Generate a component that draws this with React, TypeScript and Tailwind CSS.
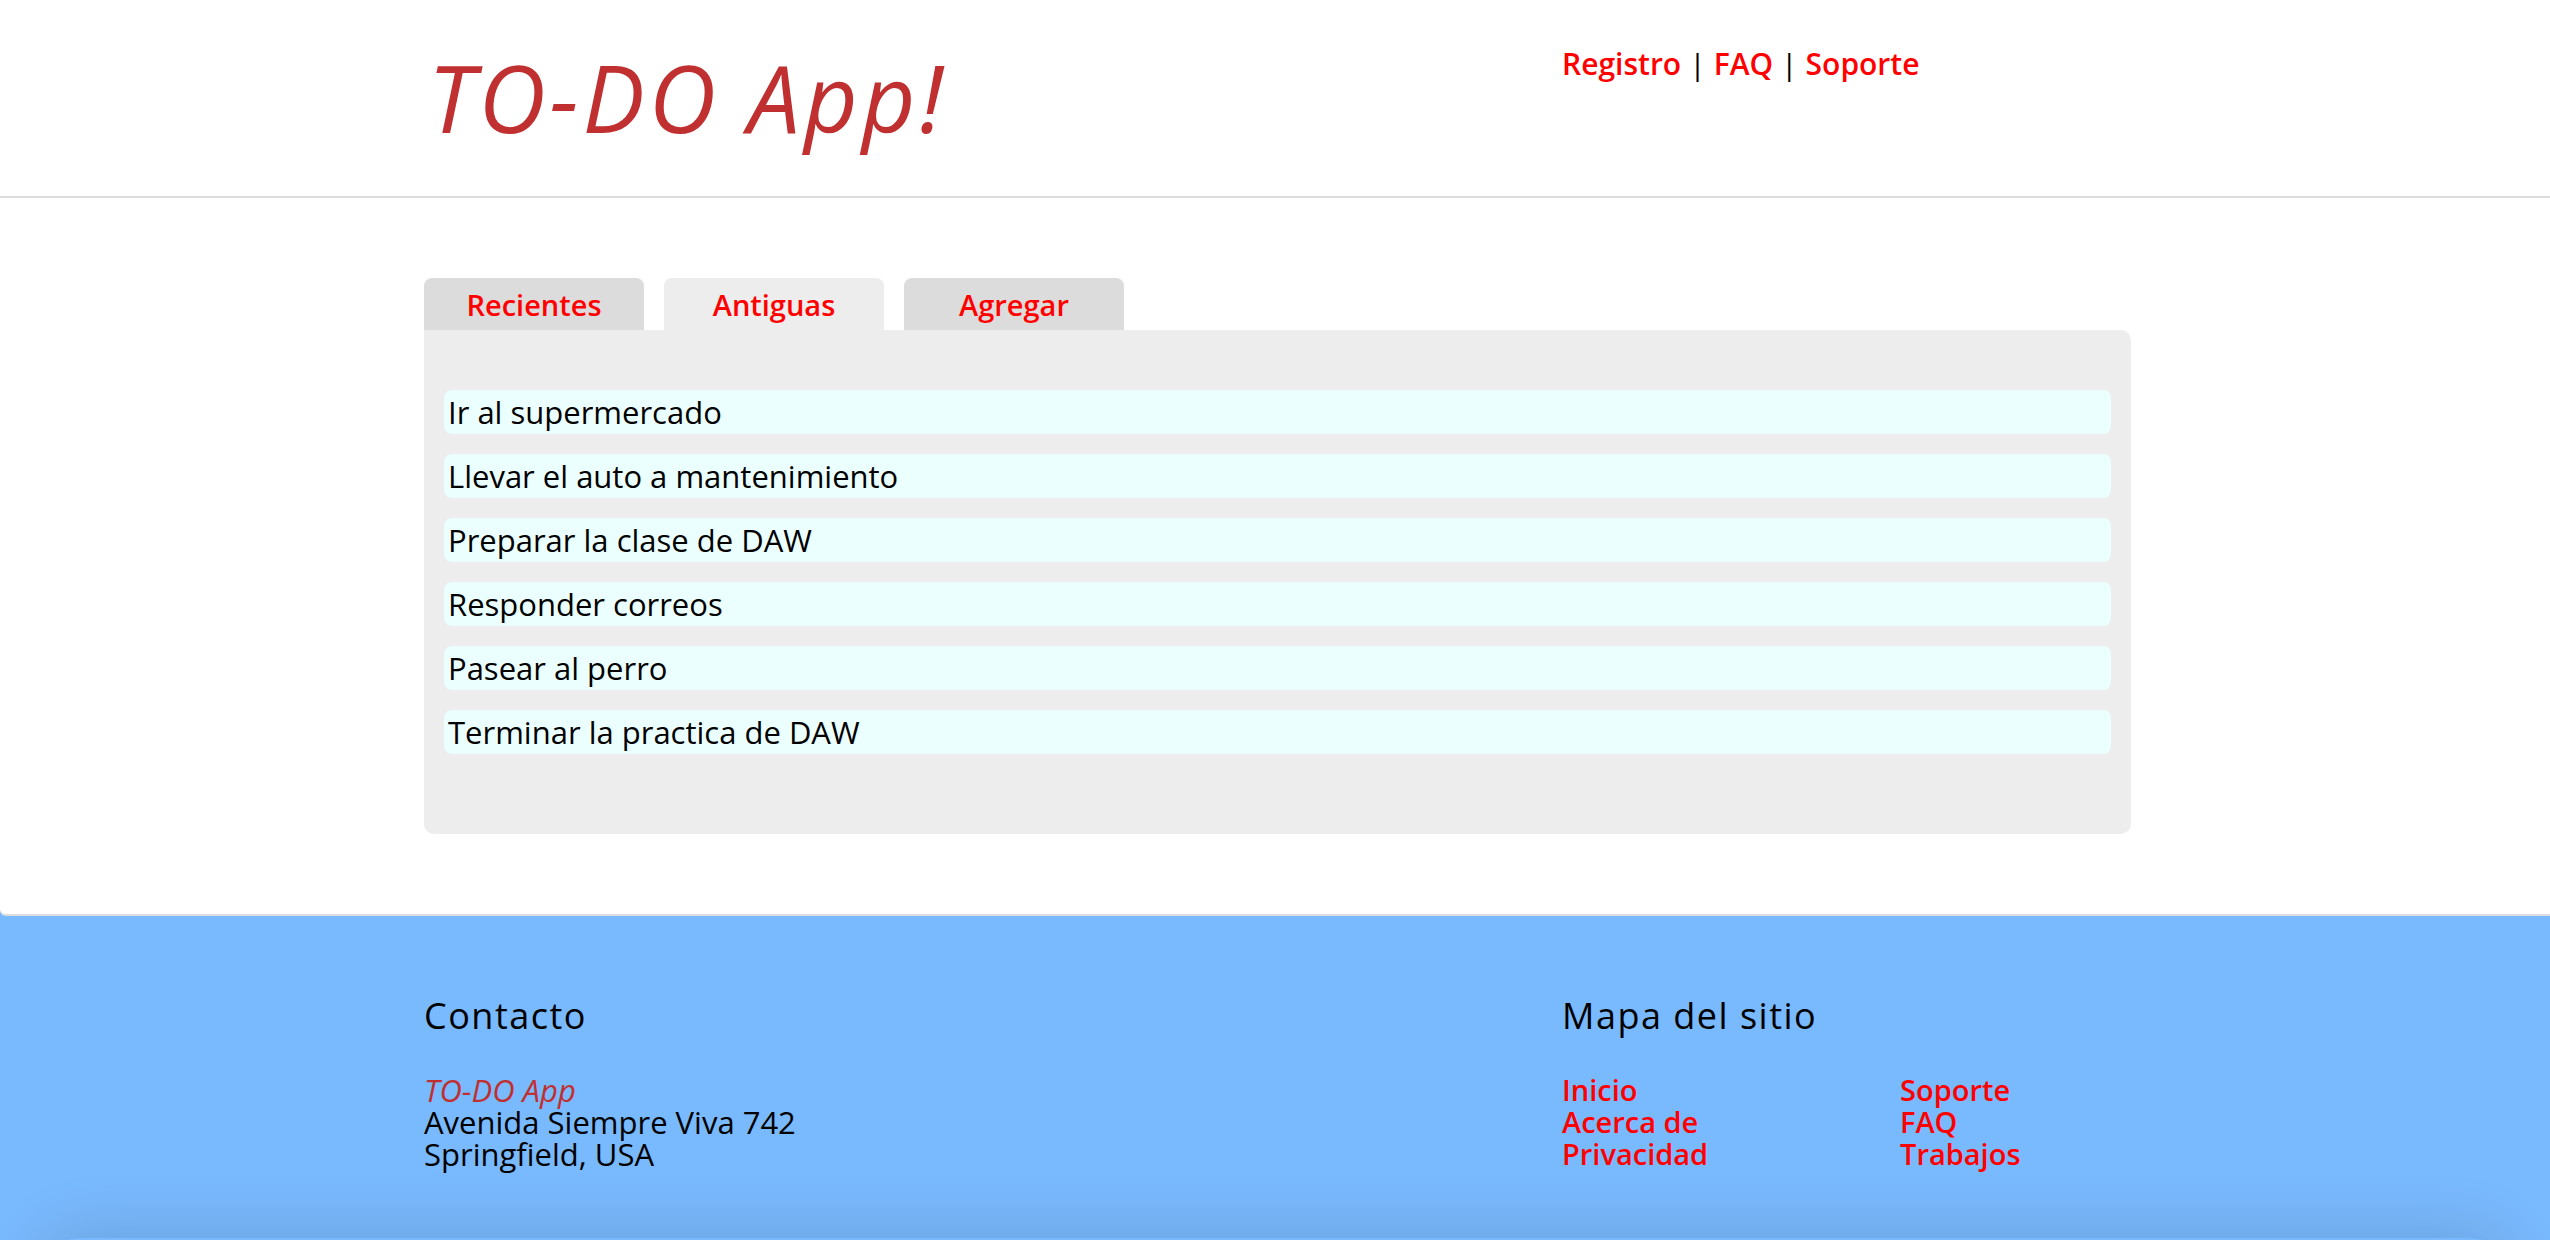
import { useState } from 'react';

const tabs = ['Recientes', 'Antiguas', 'Agregar'];

const tasks = [
  'Ir al supermercado',
  'Llevar el auto a mantenimiento',
  'Preparar la clase de DAW',
  'Responder correos',
  'Pasear al perro',
  'Terminar la practica de DAW',
];

const App = () => {
  const [active, setActive] = useState('Antiguas');

  return (
    <div className="min-h-screen bg-[#79b9fd] font-['Open_Sans',sans-serif] text-black overflow-hidden">
      <header className="bg-white border-b-2 border-[#dddddd] h-[198px]">
        <div className="mx-auto w-[1712px] pl-[5px] grid grid-cols-3">
          <h1 className="col-span-2 mt-[51px] pl-[4px] text-[93px] leading-none italic tracking-[4px] text-[#c03030]">
            TO-DO App!
          </h1>
          <nav className="mt-[49px] text-[30px] leading-none">
            <a href="#" className="text-[#ff0000] font-semibold">Registro</a>
            <span className="mx-[8px]">|</span>
            <a href="#" className="text-[#ff0000] font-semibold">FAQ</a>
            <span className="mx-[8px]">|</span>
            <a href="#" className="text-[#ff0000] font-semibold">Soporte</a>
          </nav>
        </div>
      </header>

      <main className="bg-white border-b-2 border-[#dddddd] rounded-bl-[6px] pt-[80px] pb-[80px]">
        <div className="mx-auto w-[1712px] pl-[5px]">
          <div className="flex gap-[20px]">
            {tabs.map((t) => (
              <button
                key={t}
                onClick={() => setActive(t)}
                className={
                  'w-[220px] h-[52px] rounded-t-[8px] flex items-center justify-center text-[29px] leading-none font-semibold text-[#ff0000] ' +
                  (active === t ? 'bg-[#ededed]' : 'bg-[#dcdcdc]')
                }
              >
                {t}
              </button>
            ))}
          </div>
          <div className="bg-[#ededed] rounded-b-[10px] rounded-tr-[10px] px-[20px] pt-[60px] pb-[80px] flex flex-col gap-[20px]">
            {tasks.map((task) => (
              <div key={task} className="bg-[#ebffff] rounded-[8px] h-[44px] px-[4px] text-[31px] leading-[44px]">
                {task}
              </div>
            ))}
          </div>
        </div>
      </main>

      <footer className="pt-[82px] pb-[68px]">
        <div className="mx-auto w-[1712px] pl-[5px] grid grid-cols-3">
          <div className="col-span-2">
            <h2 className="text-[36px] leading-none tracking-[1.5px]">Contacto</h2>
            <address className="not-italic mt-[40px] text-[31px] leading-[32px]">
              <span className="block italic text-[#c03030]">TO-DO App</span>
              <span className="block">Avenida Siempre Viva 742</span>
              <span className="block">Springfield, USA</span>
            </address>
          </div>
          <div>
            <h2 className="text-[36px] leading-none tracking-[1.5px]">Mapa del sitio</h2>
            <div className="mt-[40px] grid grid-cols-[338px_1fr] text-[29px] leading-[32px] font-semibold">
              <ul>
                <li><a href="#" className="text-[#ff0000]">Inicio</a></li>
                <li><a href="#" className="text-[#ff0000]">Acerca de</a></li>
                <li><a href="#" className="text-[#ff0000]">Privacidad</a></li>
              </ul>
              <ul>
                <li><a href="#" className="text-[#ff0000]">Soporte</a></li>
                <li><a href="#" className="text-[#ff0000]">FAQ</a></li>
                <li><a href="#" className="text-[#ff0000]">Trabajos</a></li>
              </ul>
            </div>
          </div>
        </div>
      </footer>
      <div className="mx-[40px] h-[120px] rounded-[40px] bg-[#79b9fd] shadow-[0_0_70px_rgba(0,0,0,0.14)]" />
    </div>
  );
};

export default App;
